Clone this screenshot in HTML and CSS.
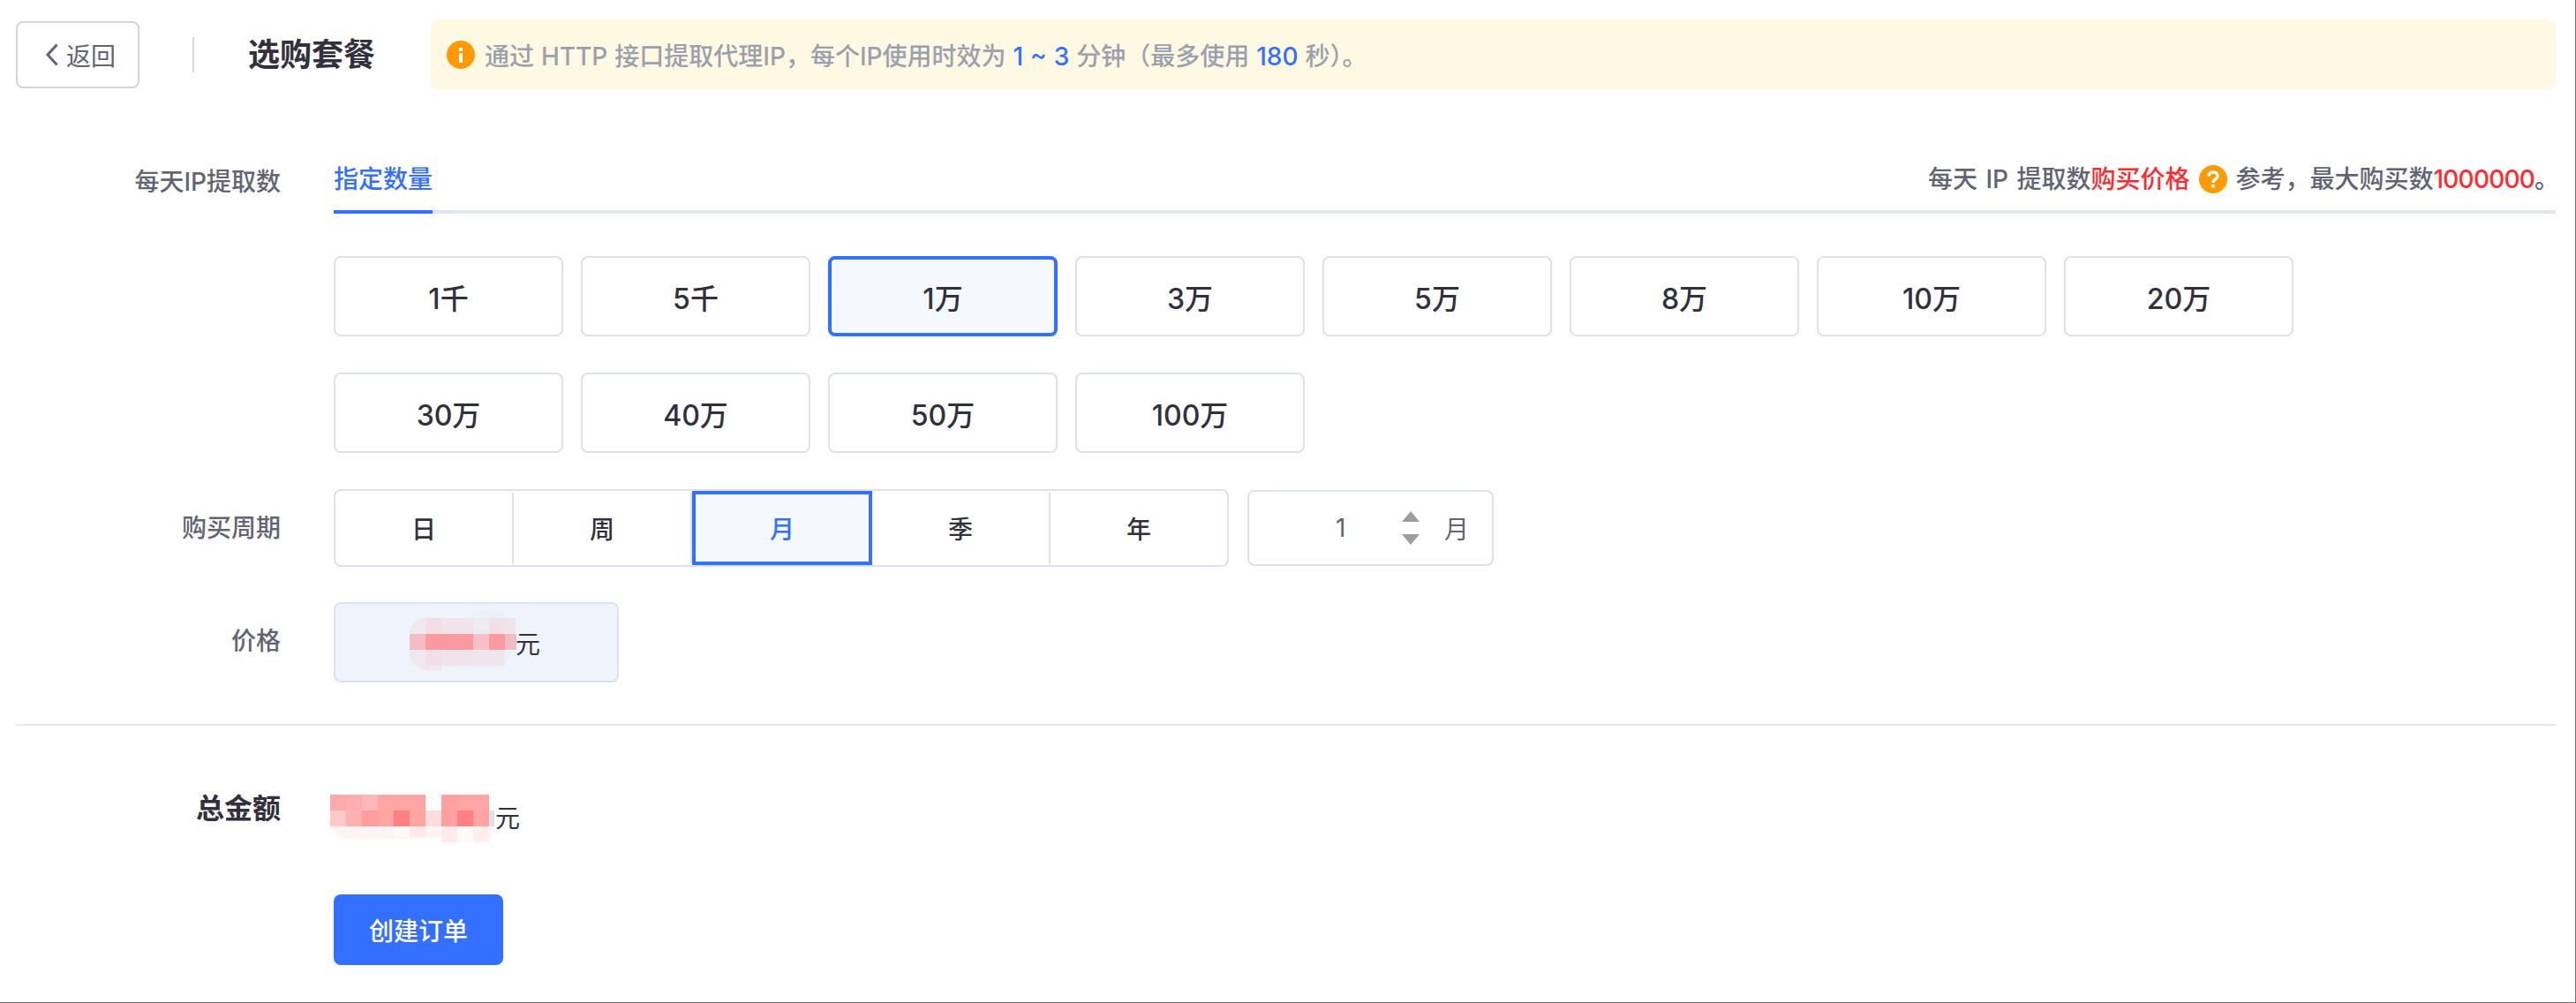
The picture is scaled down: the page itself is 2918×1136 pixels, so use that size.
FILE: index.html
```html
<!DOCTYPE html>
<html lang="zh-CN">
<head>
<meta charset="utf-8">
<title>选购套餐</title>
<link rel="stylesheet" href="styles.css">
</head>
<body>
<div class="page">
  <header class="top">
    <button class="back">
      <svg class="back-icon" width="14" height="26" viewBox="0 0 14 26"><path d="M12.5 1.5 L2 13 L12.5 24.5" fill="none" stroke="#626473" stroke-width="3"/></svg>
      <span>返回</span>
    </button>
    <span class="sep"></span>
    <h1 class="title">选购套餐</h1>
    <div class="alert">
      <svg class="alert-icon" width="32" height="32" viewBox="0 0 32 32"><circle cx="16" cy="16" r="16" fill="#ff9a00"/><rect x="14" y="8" width="4" height="4" fill="#fff"/><rect x="14" y="14" width="4" height="11" fill="#fff"/></svg>
      <span>通过 HTTP 接口提取代理IP，每个IP使用时效为 <b class="blue">1 ~ 3</b> 分钟（最多使用 <b class="blue">180</b> 秒）。</span>
    </div>
  </header>

  <section class="row row-tabs">
    <div class="label label-tab">每天IP提取数</div>
    <div class="content">
      <div class="tabs">
        <div class="tab">指定数量</div>
        <div class="tab-note">每天 IP 提取数<span class="red">购买价格</span>
          <svg class="help" width="32" height="32" viewBox="0 0 32 32"><circle cx="16" cy="16" r="16" fill="#ff9a00"/><path d="M11 12.5 C11 6.5 21 6.5 21 12.5 C21 16 16 15.5 16 20" fill="none" stroke="#fff" stroke-width="3.4"/><rect x="14.2" y="22" width="3.6" height="3.6" fill="#fff"/></svg>
          参考，最大购买数<span class="red digits">1000000</span>。</div>
      </div>
      <div class="options">
        <div class="opt">1千</div><div class="opt">5千</div><div class="opt opt-on">1万</div><div class="opt">3万</div>
        <div class="opt">5万</div><div class="opt">8万</div><div class="opt">10万</div><div class="opt">20万</div>
        <div class="opt">30万</div><div class="opt">40万</div><div class="opt">50万</div><div class="opt">100万</div>
      </div>
    </div>
  </section>

  <section class="row row-period">
    <div class="label">购买周期</div>
    <div class="content period">
      <div class="seg">
        <div class="seg-item">日</div>
        <div class="seg-item">周</div>
        <div class="seg-item seg-on">月</div>
        <div class="seg-item">季</div>
        <div class="seg-item seg-last">年</div>
      </div>
      <div class="num">
        <span class="num-val">1</span>
        <span class="arrows"><i class="up"></i><i class="down"></i></span>
        <span class="num-unit">月</span>
      </div>
    </div>
  </section>

  <section class="row row-price">
    <div class="label">价格</div>
    <div class="content">
      <div class="price">
        <svg class="mosaic-a" width="122" height="70" viewBox="0 0 122 70">
          <path d="M66 10 Q84 -4 102 2 Q120 10 122 30 V46 L102 66 H60 Z" fill="#ecf0f9"/>
          <path d="M0 22 Q4 12 18 10 H108 V46 L100 64 H36 V70 H22 Q4 68 0 52 Z" fill="#f0e8ef"/>
          <rect x="18" y="10" width="18" height="18" fill="#f2dde4"/>
          <rect x="36" y="10" width="36" height="18" fill="#f0e3ea"/>
          <rect x="72" y="10" width="18" height="18" fill="#eeebf3"/>
          <rect x="90" y="10" width="18" height="18" fill="#f2e0e8"/>
          <rect x="108" y="10" width="12" height="18" fill="#f0e3ea"/>
          <rect x="0" y="28" width="18" height="18" fill="#f4bcc2"/>
          <rect x="18" y="28" width="54" height="18" fill="#fa9a9e"/>
          <rect x="72" y="28" width="18" height="18" fill="#f6c0c6"/>
          <rect x="90" y="28" width="18" height="18" fill="#fa9a9e"/>
          <rect x="108" y="28" width="13" height="18" fill="#f2bcc2"/>
          <rect x="18" y="46" width="18" height="18" fill="#f0dfe6"/>
          <rect x="36" y="46" width="36" height="18" fill="#f0e3ea"/>
          <rect x="72" y="46" width="36" height="18" fill="#f0e5ec"/>
        </svg>
        <span class="price-unit">元</span>
      </div>
    </div>
  </section>

  <hr class="rule">

  <section class="row row-total">
    <div class="label label-total">总金额</div>
    <div class="content total">
      <svg class="mosaic-b" width="188" height="54" viewBox="0 0 188 54">
        <path d="M0 36 V8 Q2 0 10 0 H180 V36 L186 36 Q184 50 178 54 H140 Q132 50 130 48 Q70 52 24 50 Q10 50 0 36 Z" fill="#fff4f4"/>
        <rect x="0" y="0" width="18" height="18" fill="#ffa9aa"/><rect x="18" y="0" width="18" height="18" fill="#ffadad"/><rect x="36" y="0" width="18" height="18" fill="#ffb7b8"/><rect x="54" y="0" width="54" height="18" fill="#ffa5a5"/>
        <rect x="108" y="0" width="18" height="18" fill="#fffdfc"/><rect x="126" y="0" width="18" height="18" fill="#ff9f9f"/><rect x="144" y="0" width="36" height="18" fill="#ffa5a5"/>
        <rect x="0" y="18" width="18" height="18" fill="#ffc8c9"/><rect x="18" y="18" width="18" height="18" fill="#ffb1b1"/><rect x="36" y="18" width="18" height="18" fill="#ff9c9c"/><rect x="54" y="18" width="18" height="18" fill="#ffa3a3"/>
        <rect x="72" y="18" width="18" height="18" fill="#ff8080"/><rect x="90" y="18" width="18" height="18" fill="#ffa3a3"/><rect x="108" y="18" width="18" height="18" fill="#ffdcde"/><rect x="126" y="18" width="18" height="18" fill="#ff9f9f"/>
        <rect x="144" y="18" width="18" height="18" fill="#ff8080"/><rect x="162" y="18" width="18" height="18" fill="#ffa3a3"/><rect x="180" y="18" width="6" height="18" fill="#e2e2e6"/>
        <rect x="72" y="36" width="18" height="12" fill="#fffafa"/><rect x="90" y="36" width="18" height="12" fill="#ffe9eb"/><rect x="126" y="36" width="18" height="18" fill="#feeaea"/><rect x="144" y="36" width="18" height="18" fill="#fffafa"/><rect x="162" y="36" width="18" height="18" fill="#feeeee"/>
      </svg>
      <span class="total-unit">元</span>
    </div>
  </section>

  <section class="row row-submit">
    <div class="label"></div>
    <div class="content"><button class="submit">创建订单</button></div>
  </section>
</div>
</body>
</html>
```

FILE: styles.css
```css
* { box-sizing: border-box; }
html, body { margin: 0; padding: 0; background: #fff; }
body {
  font-family: "Inter", "Noto Sans CJK SC", sans-serif;
  font-size: 28px;
  color: #33303d;
}
.page {
  width: 2918px;
  height: 1136px;
  padding: 22px 22px 0 18px;
  border-right: 1px solid #6e6e6e;
  border-bottom: 1px solid #6e6e6e;
  overflow: hidden;
}

/* header */
.top { display: flex; align-items: center; height: 80px; }
.back {
  width: 140px; height: 76px;
  display: flex; align-items: center; gap: 9px;
  background: #fff;
  border: 2px solid #d5d5d8;
  border-radius: 8px;
  font: inherit;
  color: #626473;
  padding: 0 0 0 32px;
}
.sep { width: 2px; height: 40px; background: #d5d5d8; margin: 0 61px 0 60px; }
.title { margin: 0 63px 0 0; font-size: 36px; font-weight: 700; line-height: 48px; width: 144px; white-space: nowrap; }
.alert {
  flex: 1;
  height: 80px;
  display: flex; align-items: center; gap: 11px;
  padding-left: 18px;
  background: #fff9e3;
  border-radius: 10px;
  color: #9aa0ad;
  font-weight: 500;
  word-spacing: 0.5px;
}
.alert-icon, .help { flex: none; }
.blue { color: #3370ff; font-weight: 500; }
.red { color: #ff2b2f; }
.digits { letter-spacing: -0.8px; }

/* form rows */
.row { display: flex; }
.label { width: 300px; margin-right: 60px; text-align: right; color: #626473; font-weight: 500; line-height: 40px; flex: none; }
.content { flex: 1; min-width: 0; }

.row-tabs { margin-top: 72px; }
.label-tab { padding-top: 12px; }
.tabs {
  display: flex; justify-content: space-between; align-items: flex-start;
  height: 68px;
  border-bottom: 4px solid #e2e6ee;
}
.tab {
  width: 112px; height: 68px;
  border-bottom: 4px solid #3370ff;
  color: #3370ff;
  font-weight: 500;
  line-height: 40px;
  padding-top: 9px;
  white-space: nowrap;
}
.tab-note { color: #626473; font-weight: 500; line-height: 40px; padding-top: 9px; margin-right: -4px; white-space: nowrap; word-spacing: 2px; display: flex; align-items: center; }
.help { margin: 0 10px; }

.options { display: grid; grid-template-columns: repeat(8, 260px); gap: 41px 20px; margin-top: 48px; }
.opt {
  height: 91px;
  display: flex; align-items: center; justify-content: center;
  border: 2px solid #dde1ec;
  border-radius: 8px;
  font-weight: 500;
  font-size: 32px;
}
.opt-on { border: 4px solid #3370ff; background: #f5f9ff; }

.row-period { margin-top: 41px; }
.row-period .label { line-height: 88px; }
.period { display: flex; align-items: center; gap: 21px; }
.seg {
  width: 1014px; height: 88px;
  display: flex; align-items: stretch;
  border: 2px solid #dde1ec;
  border-radius: 8px;
  padding: 2px 0;
}
.seg-item {
  flex: 0 0 202px;
  display: flex; align-items: center; justify-content: center;
  border-right: 2px solid #dde1ec;
  font-weight: 500;
}
.seg-last { flex: 1; border-right: 0; }
.seg-on {
  flex: 0 0 204px;
  color: #3370ff;
  background: #f5f9ff;
  border: 4px solid #3370ff;
  margin: -2px 0;
}
.num {
  width: 279px; height: 86px;
  display: flex; align-items: center;
  border: 2px solid #dde1ec;
  border-radius: 8px;
  color: #626473;
}
.num-val { margin-left: 98px; width: 75px; }
.arrows { display: flex; flex-direction: column; gap: 14px; width: 20px; }
.up, .down { display: block; width: 0; height: 0; border-left: 10px solid transparent; border-right: 10px solid transparent; }
.up { border-bottom: 12px solid #9e9e9e; }
.down { border-top: 12px solid #9e9e9e; }
.num-unit { margin-left: 28px; }

.row-price { margin-top: 40px; }
.row-price .label { line-height: 88px; }
.price {
  width: 323px; height: 91px;
  display: flex; align-items: center;
  padding-left: 84px;
  background: #eff3fc;
  border: 2px solid #dde1ec;
  border-radius: 8px;
}
.mosaic-a { flex: none; margin-top: -5px; }
.price-unit { margin: 1px 0 0 -2px; }

.rule { border: 0; height: 2px; background: #e2e6ee; margin: 47px 0 0; }

.row-total { margin-top: 78px; }
.label-total { color: #33303d; font-weight: 700; font-size: 32px; margin-top: -4px; }
.total { display: flex; align-items: flex-start; margin-left: -4px; }
.total-unit { margin: 7px 0 0 -1px; line-height: 40px; }

.row-submit { margin-top: 59px; }
.submit {
  width: 192px; height: 80px;
  background: #3370ff;
  color: #fff;
  border: 0;
  border-radius: 8px;
  font: inherit;
  font-weight: 500;
  padding: 0;
}
```
